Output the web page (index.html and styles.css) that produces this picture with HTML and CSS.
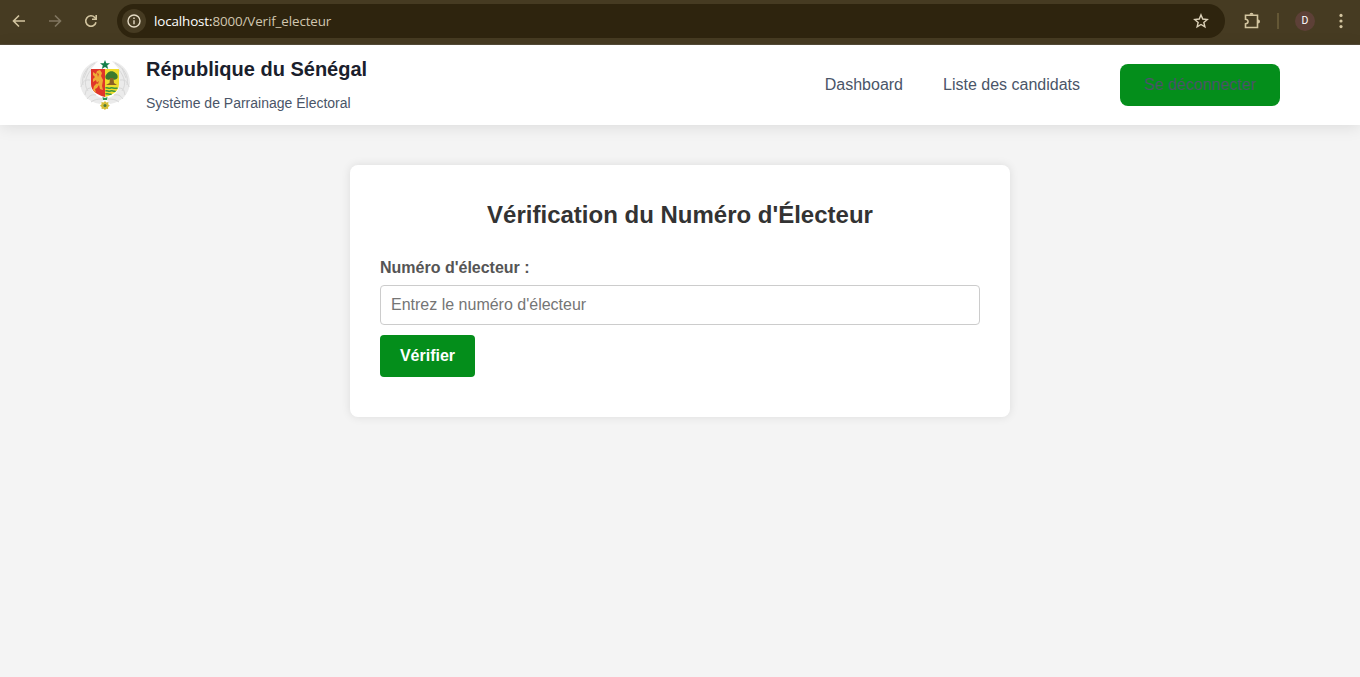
FILE: index.html
```html
<!DOCTYPE html>
<html lang="fr">
<head>
<meta charset="utf-8">
<title>Vérification du Numéro d'Électeur</title>
<link rel="stylesheet" href="styles.css">
</head>
<body>
<div class="toolbar">
  <svg class="tool back" width="16" height="16" viewBox="0 0 16 16"><path d="M14 8H3M8 2.5 2.5 8 8 13.5"/></svg>
  <svg class="tool forward" width="16" height="16" viewBox="0 0 16 16"><path d="M2 8h11M8 2.5 13.5 8 8 13.5"/></svg>
  <svg class="tool reload" width="16" height="16" viewBox="0 0 16 16"><path d="M13 9.2A5.2 5.2 0 1 1 11.8 4.5L13 5.7"/><path d="M13.2 2v4.2H9"/></svg>
  <div class="address">
    <span class="site-info"><svg width="16" height="16" viewBox="0 0 16 16"><circle cx="8" cy="8" r="6"/><path d="M8 7.3v4M8 4.5v1.5"/></svg></span>
    <span class="url"><span class="host">localhost:</span>8000/Verif_electeur</span>
    <svg class="star" width="16" height="16" viewBox="0 0 16 16"><path d="m8 1.9 1.75 4.15 4.5.4-3.4 2.95 1.02 4.4L8 11.5l-3.87 2.3 1.02-4.4-3.4-2.95 4.5-.4Z"/></svg>
  </div>
  <svg class="tool extensions" width="18" height="18" viewBox="0 0 18 18"><path d="M2.5 3.2h12v12.3h-12v-3.6c3.4-.3 3.4-4.4 0-4.7Z"/><path class="knob" d="M6.5 2.8a2 2 0 0 1 4 0ZM15 7.4a2 2 0 0 1 0 4Z"/></svg>
  <span class="divider"></span>
  <span class="avatar">D</span>
  <svg class="dots" width="4" height="16" viewBox="0 0 4 16"><circle cx="2" cy="2.4" r="1.6"/><circle cx="2" cy="8" r="1.6"/><circle cx="2" cy="13.6" r="1.6"/></svg>
</div>
<header class="header">
  <div class="brand">
    <svg class="crest" width="50" height="50" viewBox="0 0 50 50">
      <g class="wreath">
        <path class="leaf" d="M18 1C8 3 0 11 0 23c1 11 8 19 20 21l4-5C17 37 12 32 11 27V9Z"/>
        <path class="leaf" d="M32 1c10 2 18 10 18 22-1 11-8 19-20 21l-4-5c7-2 12-7 13-12V9Z"/>
        <path class="vein" d="M15 3C6 8 1 16 3 25M11 10c-5 6-8 14-3 21M10 20C3 19 2 24 1 27M11 28c-6 0-5 5-6 7M16 35c-6-1-7 2-9 4M22 39c-6 0-8 1-11 3M8 8 4 18M35 3c9 5 14 13 12 22M39 10c5 6 8 14 3 21M40 20c7-1 8 4 9 7M39 28c6 0 5 5 6 7M34 35c6-1 7 2 9 4M28 39c6 0 8 1 11 3M42 8l4 10"/>
      </g>
      <path fill="#e0352a" d="M11 9h14v28C17 35 11 31 11 24Z"/>
      <path fill="#f0dc2c" d="M25 9h14v15c0 7-6 11-14 13Z"/>
      <path fill="#efac35" d="m17 11 3-1 2 3-1 3 2 4-1 6 1 4-3-1-1-4-2 3-2 1 1 4-3-3 1-4 3-3-1-3-3 2 0-3 2-2-2-2 0-3 3 2Z"/>
      <path fill="#d84529" d="m17 13 2 1-1 3M16 23l3-2-1 3Z"/>
      <path fill="#3d7a2e" d="M25.5 18c-.5-3 1-3.500 2-5 2-2.500 6-2.500 8 0 2 1 2.500 3 2 5-1 1.500-3 2-4 1.500h-4c-2 .5-3.500 0-4-1.500Z"/>
      <path fill="#8c5f25" d="M30 18h3.500l.5 5 3 2H26l3.500-2Z"/>
      <path fill="none" stroke="#3c9640" stroke-width="1.500" d="M25.500 28c2-1 3 1 5 0s3 1 7 0M25.500 31c2-1 3 1 5 0s3 1 5 0M25.500 34c2-1 4 1 6 0"/>
      <path fill="#15804a" d="m25 0 1.300 3.300H30l-2.800 2.300 1 3.400L25 7l-3.200 2 1-3.400L20 3.300h3.700Z"/>
      <path fill="#2b9556" d="m22.500 37 2.500 1 2.500-1-.5 3h-4Z"/>
      <path fill="#d6bd36" d="m25 41 1.300 1.500 2.200-.5-.3 2.200 1.600 1.500-1.700 1.200 0 2-2-.2L25 50l-1.400-1.300-2 .2v-2L20 45.700l1.600-1.500-.2-2.200 2.200.5Z"/>
      <circle cx="25" cy="45.400" r="1.500" fill="#4b7b3d"/>
    </svg>
    <div class="brand-text">
      <div class="title">République du Sénégal</div>
      <div class="subtitle">Système de Parrainage Électoral</div>
    </div>
  </div>
  <nav class="nav">
    <a>Dashboard</a>
    <a>Liste des candidats</a>
    <a class="logout">Se déconnecter</a>
  </nav>
</header>
<main class="card">
  <h2>Vérification du Numéro d'Électeur</h2>
  <form>
    <label for="numero">Numéro d'électeur :</label>
    <input id="numero" type="text" placeholder="Entrez le numéro d'électeur">
    <button type="button">Vérifier</button>
  </form>
</main>
</body>
</html>
```

FILE: styles.css
```css
* { box-sizing: border-box; }
body {
  margin: 0;
  min-height: 100vh;
  background: #f4f4f4;
  font-family: "Liberation Sans", Arial, sans-serif;
}
.toolbar {
  display: flex;
  align-items: center;
  height: 45px;
  padding: 0 17px 3px 11px;
  background: #463b22;
  border-bottom: 1px solid #554c39;
}
.tool, .star, .site-info svg {
  flex: none;
  fill: none;
  stroke: #d3c5a0;
  stroke-width: 1.6;
}
.forward { margin-left: 20px; stroke: #817660; }
.reload { margin-left: 20px; }
.address {
  display: flex;
  align-items: center;
  flex: 1;
  height: 34px;
  margin: 0 18px 0 18px;
  padding: 0 16px 0 5px;
  border-radius: 17px;
  background: #2e240e;
}
.site-info {
  display: flex;
  align-items: center;
  justify-content: center;
  width: 24px;
  height: 24px;
  border-radius: 50%;
  background: #463b22;
}
.site-info svg { stroke: #e5dbc5; stroke-width: 1.4; }
.url {
  flex: 1;
  margin-left: 8px;
  font: 13.4px "Open Sans", "Noto Sans", sans-serif;
  letter-spacing: -0.12px;
  color: #d1c6ae;
}
.host { color: #fff; }
.star { stroke: #ddd2b9; stroke-width: 1.4; }
.extensions .knob { fill: #d3c5a0; stroke: none; }
.divider { width: 2px; height: 16px; margin-left: 16px; background: #645735; }
.avatar {
  width: 20px;
  height: 20px;
  margin: 0 24px 0 16px;
  border-radius: 50%;
  background: #5d4037;
  color: #fff;
  font: 400 10.5px/20px Roboto, sans-serif;
  text-align: center;
}
.dots { flex: none; fill: #d3c5a0; }
.header {
  display: flex;
  align-items: center;
  justify-content: space-between;
  height: 80px;
  padding: 0 80px;
  background: #fff;
  box-shadow: 0 2px 15px rgba(0, 0, 0, 0.1);
}
.brand { display: flex; align-items: center; gap: 16px; }
.leaf { fill: #ebebeb; }
.vein { fill: none; stroke: #d8d8d8; stroke-width: 1; }
.title { font-size: 20px; font-weight: 700; line-height: 32px; color: #1a202c; }
.subtitle { margin: 7px 0 2px; font-size: 14px; line-height: 23px; color: #4a5568; }
.nav { display: flex; align-items: center; gap: 40px; font-size: 16px; color: #4a5568; }
.logout {
  width: 160px;
  height: 42px;
  border-radius: 8px;
  background: #048e1b;
  line-height: 42px;
  text-align: center;
}
.card {
  width: 660px;
  height: 252px;
  margin: 40px auto 0;
  padding: 30px;
  border-radius: 8px;
  background: #fff;
  box-shadow: 0 0 10px rgba(0, 0, 0, 0.1);
}
h2 { margin: 0 0 23px; font-size: 24px; line-height: 40px; text-align: center; color: #333; }
form { display: flex; flex-direction: column; align-items: flex-start; }
label { margin-bottom: 7px; font-size: 16px; font-weight: 700; line-height: 20px; color: #555; }
input {
  width: 100%;
  height: 40px;
  padding: 10px;
  border: 1px solid #ccc;
  border-radius: 4px;
  font: 16px "Liberation Sans", Arial, sans-serif;
}
input::placeholder { color: #757575; }
button {
  width: 95px;
  height: 42px;
  margin-top: 10px;
  padding: 0;
  border: 0;
  border-radius: 4px;
  background: #048e1b;
  color: #fff;
  font: 700 16px "Liberation Sans", Arial, sans-serif;
}
```
